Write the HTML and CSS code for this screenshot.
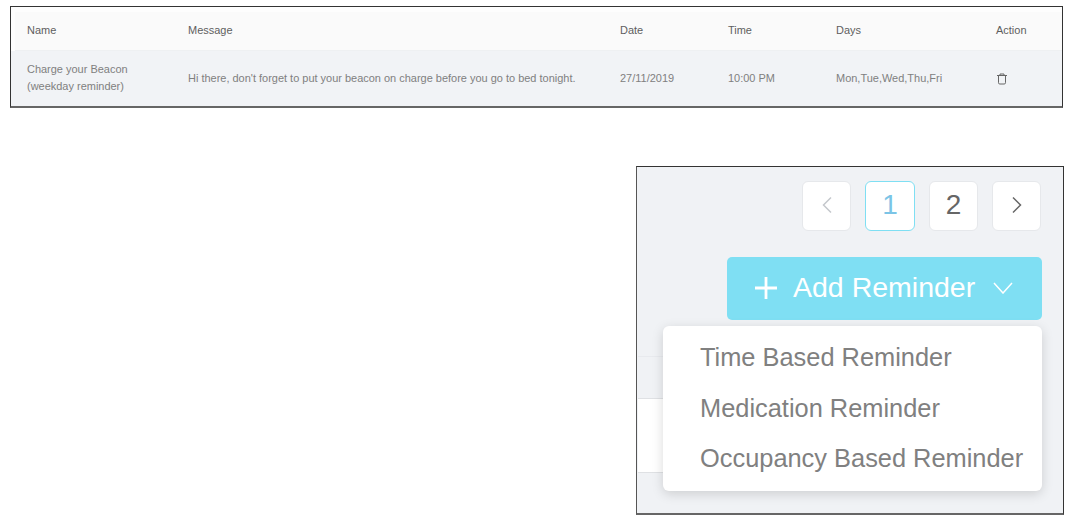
FILE: index.html
```html
<!DOCTYPE html>
<html lang="en">
<head>
    <meta charset="UTF-8">
    <meta name="viewport" content="width=device-width, initial-scale=1.0">
    <link rel="stylesheet" href="styles.css">
    <title>Reminders</title>
</head>
<body>
    <div class="table-shot">
        <div class="table-inner">
            <div class="row head-row">
                <div>Name</div>
                <div>Message</div>
                <div>Date</div>
                <div>Time</div>
                <div>Days</div>
                <div>Action</div>
            </div>
            <div class="row body-row">
                <div class="name-cell">Charge your Beacon<br>(weekday reminder)</div>
                <div>Hi there, don't forget to put your beacon on charge before you go to bed tonight.</div>
                <div>27/11/2019</div>
                <div>10:00 PM</div>
                <div>Mon,Tue,Wed,Thu,Fri</div>
                <div>
                    <svg class="trash" width="12" height="12" viewBox="0 0 12 12" fill="none" stroke="#666" stroke-width="1">
                        <path d="M1 2.5h10M4 2.5V1h4v1.5M2.5 2.5v7.2q0 1.3 1.3 1.3h4.4q1.3 0 1.3-1.3V2.5"/>
                    </svg>
                </div>
            </div>
        </div>
    </div>

    <div class="menu-shot">
        <div class="pager">
            <button class="page-btn">
                <svg width="14" height="18" viewBox="0 0 14 18" fill="none" stroke="#c4c7cc" stroke-width="1.5"><path d="M11 1.500L3.500 9l7.500 7.500"/></svg>
            </button>
            <button class="page-btn current">1</button>
            <button class="page-btn">2</button>
            <button class="page-btn">
                <svg width="14" height="18" viewBox="0 0 14 18" fill="none" stroke="#666" stroke-width="1.5"><path d="M3 1.500L10.500 9 3 16.500"/></svg>
            </button>
        </div>
        <button class="add-btn">
            <svg width="24" height="24" viewBox="0 0 24 24" stroke="#fff" stroke-width="2.800"><path d="M12 1v22M1 12h22"/></svg>
            <span>Add Reminder</span>
            <svg width="20" height="12" viewBox="0 0 20 12" fill="none" stroke="#fff" stroke-width="1.500"><path d="M1 1l9 10 9-10"/></svg>
        </button>
        <div class="back-rows">
            <div class="back-row"></div>
            <div class="back-row white"></div>
        </div>
        <ul class="dropdown">
            <li>Time Based Reminder</li>
            <li>Medication Reminder</li>
            <li>Occupancy Based Reminder</li>
        </ul>
    </div>
</body>
</html>
```

FILE: styles.css
```css
/* Global */
body {
    margin: 0;
    padding: 6px 11px 0 10px;
    background-color: #fff;
    font-family: "Liberation Sans", Arial, sans-serif;
    color: #666;
}

/* Table screenshot */
.table-shot {
    height: 99px;
    border: 1px solid #333;
    border-bottom: 2px solid #666;
    background-color: #fdfdfd;
}

.table-inner {
    padding: 5px 0 0 4px;
}

.row {
    display: grid;
    grid-template-columns: 161px 432px 108px 108px 160px 1fr;
    align-items: center;
    padding-left: 12px;
    font-size: 10.98px;
}

.head-row {
    height: 36px;
    padding-bottom: 2px;
    background-color: #fafafa;
    border-bottom: 1px solid #eef0f2;
    color: #5e5e5e;
}

.body-row {
    height: 55px;
    margin-left: -4px;
    padding-left: 16px;
    background-color: #f1f3f6;
    line-height: 17px;
    color: #808080;
}

.name-cell {
    padding-bottom: 2px;
}

.trash {
    display: block;
}

/* Pagination and menu screenshot */
.menu-shot {
    position: relative;
    width: 404px;
    height: 332px;
    margin: 58px -1px 0 auto;
    padding: 14px 21px 0 1px;
    border: 1px solid #333;
    border-left: 1px solid #555;
    border-bottom: 2px solid #666;
    background-color: #f0f2f5;
    overflow: hidden;
}

.pager {
    display: flex;
    justify-content: flex-end;
    gap: 14px;
    margin-right: 1px;
}

.page-btn {
    display: flex;
    align-items: center;
    justify-content: center;
    width: 49px;
    height: 50px;
    padding: 0 0 2px;
    border: 1px solid #e6e8eb;
    border-radius: 6px;
    background-color: #fff;
    font-family: inherit;
    font-size: 28px;
    color: #666;
}

.page-btn.current {
    width: 50px;
    border-color: #7fdff3;
    color: #7bc4e6;
}

.add-btn {
    display: flex;
    align-items: center;
    gap: 15px;
    width: 315px;
    height: 63px;
    margin: 26px 0 0 auto;
    padding: 0 0 2px 27px;
    border: none;
    border-radius: 5px;
    background-color: #7fdff3;
    font-family: inherit;
    font-size: 28.5px;
    color: #fff;
}

.add-btn span {
    margin-right: 3px;
}

.back-rows {
    margin-top: 36px;
}

.back-row {
    height: 41px;
    border-top: 1px solid #e8eaee;
}

.back-row.white {
    height: 73px;
    border-top: 1px solid #dfe1e4;
    border-bottom: 1px solid #dfe1e4;
    background-color: #fff;
}

.dropdown {
    position: absolute;
    top: 159px;
    right: 21px;
    width: 379px;
    height: 165px;
    margin: 0;
    padding: 6px 0 0;
    box-sizing: border-box;
    list-style: none;
    border-radius: 6px;
    background-color: #fff;
    box-shadow: 0 3px 12px rgba(0, 0, 0, 0.15);
}

.dropdown li {
    height: 50.5px;
    padding-left: 37px;
    font-size: 25.4px;
    line-height: 50px;
    color: #808080;
}
```
